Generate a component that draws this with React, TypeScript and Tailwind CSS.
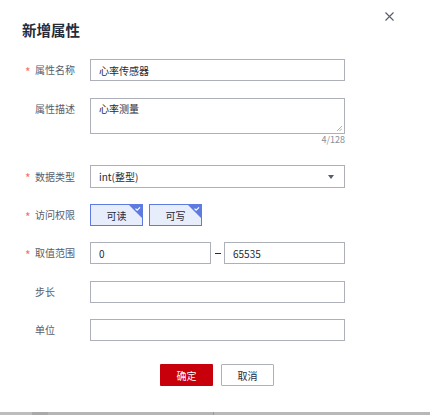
import React from "react";

const font = { fontFamily: '"Noto Sans CJK SC", "Noto Sans", sans-serif' };

const Label = ({ text, required }: { text: string; required?: boolean }) => (
  <div className="flex w-[68px] shrink-0 items-center text-[10px] leading-[12px] text-[#575d6c]">
    <span className="w-[13px] pl-[3px] pt-[3px] text-[12px] leading-[12px] text-[#f66f6a]">{required ? "*" : ""}</span>
    <span>{text}</span>
  </div>
);

const Chip = ({ title }: { title: string }) => (
  <div className="relative flex h-[22px] w-[53px] items-center justify-center border border-[#5e7ce0] bg-[#e8edfb] text-[10px] text-[#252b3a]">
    {title}
    <svg className="absolute right-0 top-0" width="13" height="13" viewBox="0 0 13 13">
      <path d="M0 0 H13 V13 Z" fill="#5e7ce0" />
      <path d="M6.5 3.6 L8.2 5.2 L11 2.3" stroke="#fff" strokeWidth="1.2" fill="none" />
    </svg>
  </div>
);

const App = () => {
  return (
    <div className="relative h-[415px] w-[430px] overflow-hidden bg-white" style={font}>
      {/* close */}
      <svg className="absolute left-[385px] top-[12px]" width="9" height="9" viewBox="0 0 9 9">
        <path d="M0.5 0.5 L8.5 8.5 M8.5 0.5 L0.5 8.5" stroke="#575d6c" strokeWidth="1.1" />
      </svg>

      <div className="px-[22px] pt-[21px]">
        <div className="text-[14.5px] font-bold leading-[17px] text-[#252b3a]">新增属性</div>

        <div className="mt-[21px] flex h-[22px] items-center">
          <Label text="属性名称" required />
          <div className="flex h-[22px] w-[255px] items-center border border-[#adb0b8] px-[8px] text-[10px] text-[#252b3a]">
            心率传感器
          </div>
        </div>

        <div className="mt-[17px] flex">
          <div className="pt-[5px]">
            <Label text="属性描述" />
          </div>
          <div className="w-[255px]">
            <div className="relative h-[36px] border border-[#adb0b8] px-[8px] pt-[4px] text-[10px] leading-[12px] text-[#252b3a]">
              心率测量
              <svg className="absolute bottom-[2px] right-[2px]" width="6" height="6" viewBox="0 0 6 6">
                <path d="M1 6 L6 1 M3.5 6 L6 3.5" stroke="#9a9a9a" strokeWidth="0.8" />
              </svg>
            </div>
            <div className="mt-[1px] text-right text-[9px] leading-[10px] text-[#8a8e99]">4/128</div>
          </div>
        </div>

        <div className="mt-[20px] flex h-[23px] items-center">
          <Label text="数据类型" required />
          <div className="flex h-[23px] w-[255px] items-center justify-between border border-[#adb0b8] pl-[8px] pr-[10px] text-[10px] text-[#252b3a]">
            <span>int(整型)</span>
            <svg width="6" height="4" viewBox="0 0 6 4">
              <path d="M0 0 H6 L3 4 Z" fill="#575d6c" />
            </svg>
          </div>
        </div>

        <div className="mt-[16px] flex h-[22px] items-center">
          <Label text="访问权限" required />
          <div className="flex gap-[6px]">
            <Chip title="可读" />
            <Chip title="可写" />
          </div>
        </div>

        <div className="mt-[16px] flex h-[22px] items-center">
          <Label text="取值范围" required />
          <div className="flex h-[22px] w-[121px] items-center border border-[#adb0b8] px-[8px] text-[10px] text-[#252b3a]">
            0
          </div>
          <div className="ml-[4px] mr-[3px] h-[1px] w-[6px] bg-[#252b3a]" />
          <div className="flex h-[22px] w-[121px] items-center border border-[#adb0b8] px-[8px] text-[10px] text-[#252b3a]">
            65535
          </div>
        </div>

        <div className="mt-[17px] flex h-[22px] items-center">
          <Label text="步长" />
          <div className="h-[22px] w-[255px] border border-[#adb0b8]" />
        </div>

        <div className="mt-[16px] flex h-[22px] items-center">
          <Label text="单位" />
          <div className="h-[22px] w-[255px] border border-[#adb0b8]" />
        </div>

        <div className="mt-[23px] flex justify-center gap-[8px] pl-[4px]">
          <button className="h-[22px] w-[53px] rounded-[1px] bg-[#c7000b] text-[10px] text-white">确定</button>
          <button className="h-[22px] w-[53px] rounded-[1px] border border-[#adb0b8] bg-white text-[10px] text-[#252b3a]">
            取消
          </button>
        </div>
      </div>

      {/* scrollbar strip */}
      <div className="absolute bottom-0 left-0 flex h-[3px] w-[430px]">
        <div className="w-[32px] bg-[#bdbdbd]" />
        <div className="w-[16px] bg-[#a9a9a9]" />
        <div className="w-[165px] bg-[#b5b5b5]" />
        <div className="w-[1px] bg-[#9a9a9a]" />
        <div className="flex-1 bg-[#b8b8b8]" />
      </div>
    </div>
  );
};

export default App;
